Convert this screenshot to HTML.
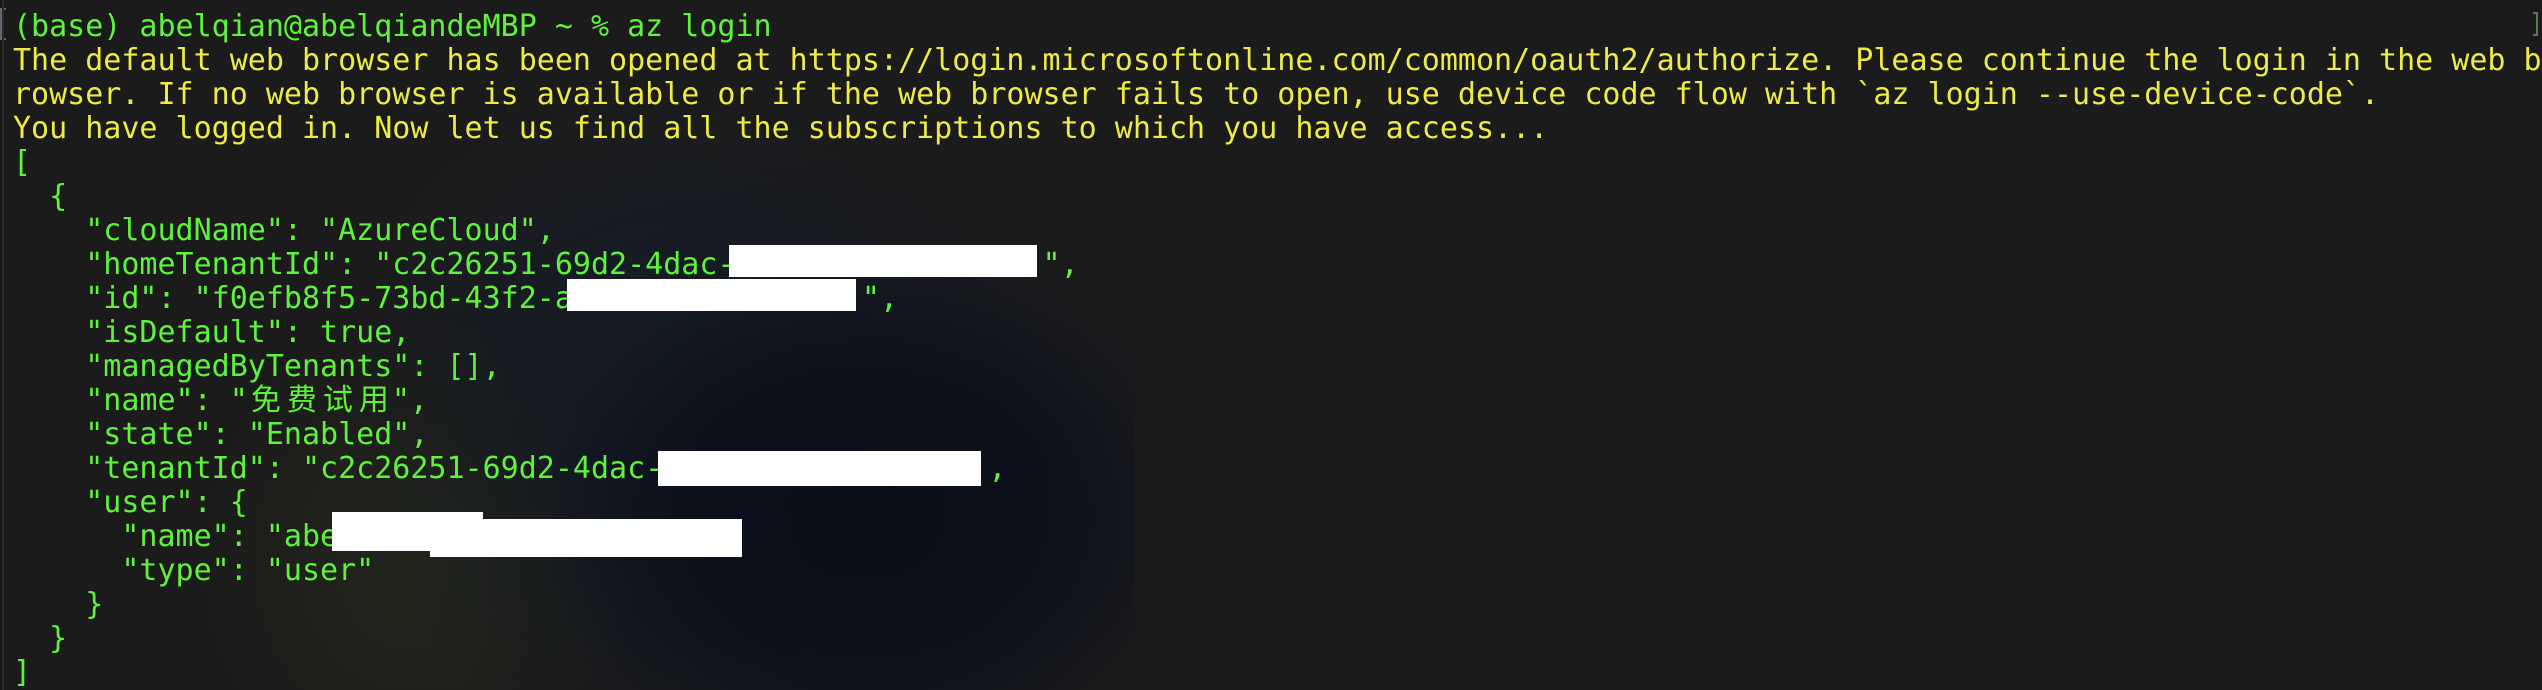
<!DOCTYPE html>
<html><head><meta charset="utf-8"><style>
html,body{margin:0;padding:0}
body{width:2542px;height:690px;overflow:hidden;background:#1b1b1b;position:relative;font-family:"DejaVu Sans Mono","Liberation Mono","Noto Sans CJK SC",monospace;font-size:30px}
.bg{position:absolute;left:0;top:0;width:2542px;height:690px;
background:
radial-gradient(ellipse 330px 260px at 870px 520px,#0a0e1a 0%,rgba(10,14,26,.7) 60%,rgba(10,14,26,0) 100%),
radial-gradient(ellipse 450px 320px at 780px 460px,rgba(16,22,36,.9) 0%,rgba(16,22,36,0) 100%),
radial-gradient(ellipse 220px 240px at 420px 560px,rgba(38,42,28,.8) 0%,rgba(38,42,28,0) 100%),
radial-gradient(ellipse 300px 220px at 650px 300px,rgba(24,30,40,.8) 0%,rgba(24,30,40,0) 100%);}
.bg2{position:absolute;left:1135px;top:0;width:1407px;height:690px;background:#1b1b1b}
.t{position:absolute;left:13px;top:10px;white-space:pre;line-height:34px}
.g{color:#5ef23c}.y{color:#eeea48}
.c{display:inline-block;width:36px;text-align:center}
.w{position:absolute;background:#fff}
</style></head><body>
<div class="bg"></div><div class="bg2"></div>
<div style="position:absolute;left:0;top:8px;width:6px;height:32px;border:2px solid #667;border-right:none;box-sizing:border-box"></div>
<div style="position:absolute;left:2533px;top:12px;width:5px;height:24px;border:2px solid #5a7a4a;border-left:none;box-sizing:border-box"></div>
<div style="position:absolute;left:2px;top:0;width:2px;height:690px;background:#2a2a2a"></div>
<div class="t"><span class="g">(base) abelqian@abelqiandeMBP ~ % az login</span>
<span class="y">The default web browser has been opened at https://login.microsoftonline.com/common/oauth2/authorize. Please continue the login in the web b</span>
<span class="y">rowser. If no web browser is available or if the web browser fails to open, use device code flow with `az login --use-device-code`.</span>
<span class="y">You have logged in. Now let us find all the subscriptions to which you have access...</span>
<span class="g">[
  {
    "cloudName": "AzureCloud",
    "homeTenantId": "c2c26251-69d2-4dac-                 ",
    "id": "f0efb8f5-73bd-43f2-a                ",
    "isDefault": true,
    "managedByTenants": [],
    "name": "<span class="c">免</span><span class="c">费</span><span class="c">试</span><span class="c">用</span>",
    "state": "Enabled",
    "tenantId": "c2c26251-69d2-4dac-                  ,
    "user": {
      "name": "abe
      "type": "user"
    }
  }
]</span></div>
<div class="w" style="left:729px;top:245px;width:308px;height:32px"></div>
<div class="w" style="left:567px;top:279px;width:289px;height:32px"></div>
<div class="w" style="left:658px;top:451px;width:323px;height:35px"></div>
<div class="w" style="left:332px;top:512px;width:151px;height:39px"></div>
<div class="w" style="left:430px;top:519px;width:312px;height:38px"></div>
</body></html>
